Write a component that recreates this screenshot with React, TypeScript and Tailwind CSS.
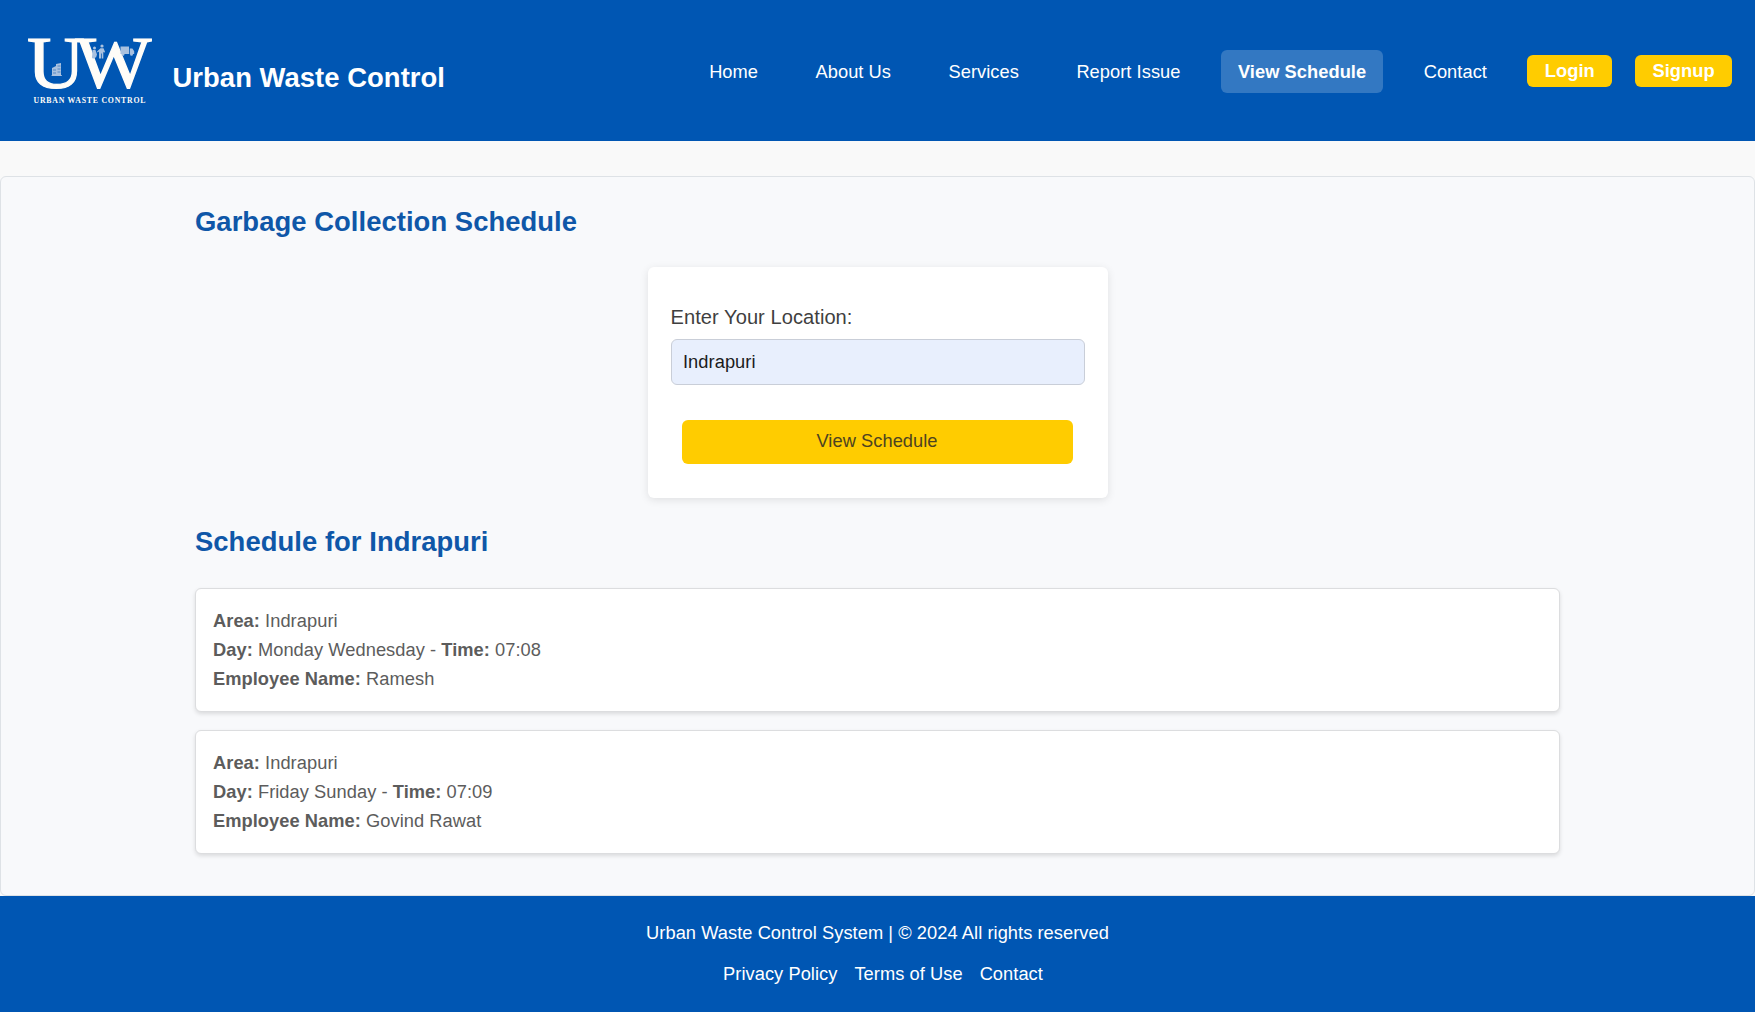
import React from "react";

function Logo() {
  return (
    <svg width="130" height="80" viewBox="20 30 130 80" className="-ml-px block shrink-0 overflow-visible" fill="#fffdf8">
      <g fontFamily='"Liberation Serif", serif' fontSize="75" stroke="#fffdf8" strokeWidth="1.2">
        <text x="27" y="87.7" textLength="58" lengthAdjust="spacingAndGlyphs">U</text>
        <text x="75.5" y="87.7" textLength="76" lengthAdjust="spacingAndGlyphs">W</text>
      </g>
      <text x="33.5" y="103.4" fontFamily='"Liberation Serif", serif' fontWeight="700" fontSize="7.8" textLength="112">
        URBAN WASTE CONTROL
      </text>
      <g fill="#a9c1df">
        <path d="M52 68l4-2v-2l5-1v13h-9z" />
        <path d="M57.5 66h3M57.5 69h3M57.5 72h3M53 70h3M53 73h3" stroke="#3f78bd" strokeWidth="0.8" />
        <path d="M51.5 75.5h10.5" stroke="#a9c1df" strokeWidth="0.8" />
        <circle cx="94.5" cy="48" r="1.5" />
        <path d="M92.5 50h3l1.5 4.5-1 3h-4z" />
        <circle cx="93.5" cy="57" r="1.6" />
        <circle cx="102" cy="46" r="1.6" />
        <path d="M97 51.5l3.5-3.2h3l1.5 3.5-.8 1-.9-1V58.5h-1.3v-5h-.7v5H99v-7l-1.3 1z" />
        <path d="M120.5 46.500h8.500v7.500h-8.500zM129.800 48.500h2.600l1.800 2.700V54h-4.400z" />
        <circle cx="123" cy="54.400" r="1.400" />
        <circle cx="131.500" cy="54.400" r="1.400" />
      </g>
    </svg>
  );
}

const links = [
  { label: "Home", active: false },
  { label: "About Us", active: false },
  { label: "Services", active: false },
  { label: "Report Issue", active: false },
  { label: "View Schedule", active: true },
  { label: "Contact", active: false },
];

const schedules = [
  { area: "Indrapuri", day: "Monday Wednesday", time: "07:08", employee: "Ramesh" },
  { area: "Indrapuri", day: "Friday Sunday", time: "07:09", employee: "Govind Rawat" },
];

export default function App() {
  return (
    <div className="flex h-[1012px] w-full flex-col overflow-hidden bg-[#f9f9f9] font-['Liberation_Sans',Arial,sans-serif] text-[18.28px] tracking-[0.05px]">
      <header className="flex h-[141px] shrink-0 items-start justify-between bg-[#0056b3] pr-[23px] pl-[21px] text-white">
        <div className="flex pt-[30px]">
          <Logo />
          <h1 className="mt-[27.5px] ml-[22.5px] text-[27.42px] leading-[40px] font-bold whitespace-nowrap">Urban Waste Control</h1>
        </div>
        <nav className="flex items-start pt-[49.5px]">
          <ul className="flex gap-[23.2px]">
            {links.map((l) => (
              <li key={l.label}>
                <a
                  href="#"
                  className={
                    l.active
                      ? "block rounded-[6px] bg-[#3378c2] px-[17.14px] leading-[43px] font-bold whitespace-nowrap"
                      : "block px-[17.14px] leading-[43px] whitespace-nowrap"
                  }
                >
                  {l.label}
                </a>
              </li>
            ))}
          </ul>
          <div className="mt-[5.5px] ml-[23.4px] flex gap-[23.2px]">
            <button className="h-[31.5px] rounded-[6px] bg-[#ffcc00] px-[17.3px] text-[18.28px] leading-[31px] font-bold">Login</button>
            <button className="h-[31.5px] rounded-[6px] bg-[#ffcc00] px-[17.3px] text-[18.28px] leading-[31px] font-bold">Signup</button>
          </div>
        </nav>
      </header>

      <main className="mt-[35px] h-[719.5px] shrink-0 rounded-[6px] border border-[#dee2e6] bg-[#f8f9fb] px-[194px]">
        <h2 className="mt-[23px] text-[27.42px] leading-[44px] font-bold text-[#0f57a8]">Garbage Collection Schedule</h2>
        <form className="mx-auto mt-[23px] h-[231px] w-[460px] rounded-[6px] bg-white px-[23px] pt-[34px] shadow-[0_2px_9px_rgba(0,0,0,0.1)]" onSubmit={(e) => e.preventDefault()}>
          <label htmlFor="location" className="block text-[20.1px] leading-[32px] text-[#3f3f3f]">Enter Your Location:</label>
          <input
            id="location"
            defaultValue="Indrapuri"
            className="mt-[6px] block h-[46px] w-full rounded-[6px] border border-[#c9ced8] bg-[#e8effd] px-[11.5px] text-[18.28px] tracking-[0.05px] text-[#1b1b1b] outline-none"
          />
          <button className="mx-[11px] mt-[35px] block h-[44px] w-[391px] rounded-[6px] bg-[#ffcc00] pb-[2px] text-[18.28px] tracking-[0.05px] text-[#4d4320]">View Schedule</button>
        </form>

        <h2 className="mt-[22px] text-[27.42px] leading-[44px] font-bold text-[#0f57a8]">Schedule for Indrapuri</h2>
        <ul className="mt-[23.5px] flex flex-col gap-[18px]">
          {schedules.map((s) => (
            <li key={s.day} className="h-[124px] rounded-[6px] border border-[#dcdddf] bg-white p-[17px] leading-[29.25px] text-[#5c5c5c] shadow-[0_2px_4px_rgba(0,0,0,0.12)]">
              <p><strong>Area:</strong> {s.area}</p>
              <p><strong>Day:</strong> {s.day} - <strong>Time:</strong> {s.time}</p>
              <p><strong>Employee Name:</strong> {s.employee}</p>
            </li>
          ))}
        </ul>
      </main>

      <footer className="flex flex-1 flex-col items-center bg-[#0056b3] pt-[22.5px] text-white">
        <p className="leading-[30px]">Urban Waste Control System | © 2024 All rights reserved</p>
        <div className="mt-[10.5px] flex gap-[17px] pl-[11px] leading-[30px]">
          <a href="#">Privacy Policy</a>
          <a href="#">Terms of Use</a>
          <a href="#">Contact</a>
        </div>
      </footer>
    </div>
  );
}
